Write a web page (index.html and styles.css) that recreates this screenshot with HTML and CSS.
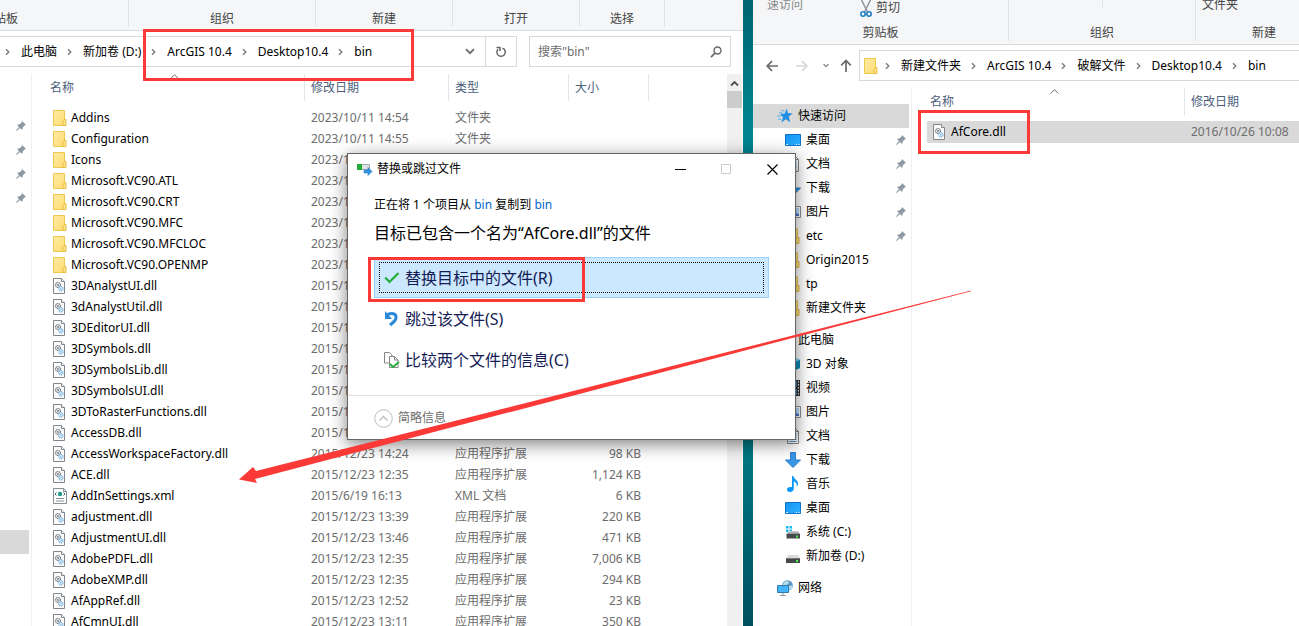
FILE: index.html
```
<!DOCTYPE html>
<html lang="zh-CN">
<head>
<meta charset="utf-8">
<title>bin</title>
<link rel="stylesheet" href="styles.css">
</head>
<body>
<svg class="defs" aria-hidden="true">
  <defs>
    <linearGradient id="gf" x1="0" y1="0" x2="1" y2="1"><stop offset="0" stop-color="#ffeba3"/><stop offset="1" stop-color="#ffdc73"/></linearGradient>
    <linearGradient id="gd" x1="0" y1="0" x2="1" y2="1"><stop offset="0" stop-color="#1492f5"/><stop offset="1" stop-color="#2fb2ff"/></linearGradient>
    <linearGradient id="gg" x1="0" y1="0" x2="0" y2="1"><stop offset="0" stop-color="#d3d5d8"/><stop offset="1" stop-color="#8a8d90"/></linearGradient>
  </defs>
  <symbol id="folder" viewBox="0 0 14 16"><path d="M.5.5h11v15H.5z" fill="url(#gf)" stroke="#edc84e"/><path d="M11.500 9.500h1.500v6h-3v-4z" fill="#ffe48f" stroke="#e6bd3c"/></symbol>
  <symbol id="dll" viewBox="0 0 12 16" preserveAspectRatio="xMinYMid"><path d="M.5.500h8l3 3v12H.500z" fill="#fcfcfc" stroke="#80868b"/><path d="M8.500.500v3h3" fill="#fff" stroke="#80868b"/><circle cx="5" cy="7" r="2.500" fill="#e3e6e9" stroke="#747b81" stroke-width="1.100" stroke-dasharray="1.300 .5"/><circle cx="5" cy="7" r=".9" fill="#747b81"/><circle cx="7.900" cy="10.800" r="2.200" fill="#dbeefb" stroke="#7fb3dc" stroke-width="1.100" stroke-dasharray="1.300 .5"/><circle cx="7.900" cy="10.800" r=".8" fill="#7fb3dc"/></symbol>
  <symbol id="xml" viewBox="0 0 14 16"><path d="M.5.500h10l3 3v12H.500z" fill="#fff" stroke="#8a8f94"/><path d="M10.500.500v3h3" fill="none" stroke="#8a8f94"/><circle cx="7" cy="6" r="2.200" fill="#1b9b83"/><path d="M3.500 4.500 2 6l1.500 1.500M10.500 4.500 12 6l-1.500 1.500" fill="none" stroke="#44617c"/><path d="M3 10.500h8M3 13h8" stroke="#8a8f94"/></symbol>
  <symbol id="pin" viewBox="0 0 10 10"><path d="M6.200.500 9.500 3.800 8.300 4.500 6.500 6.200 6 8.500 3.900 6.700.6 9.700.3 9.400 3.300 6.100 1.500 4 3.800 3.500 5.600 1.700z" fill="#8b98a3" stroke="#8b98a3" stroke-width=".6"/></symbol>
  <symbol id="chev" viewBox="0 0 5 8"><path d="M1 1.200 3.800 4 1 6.800" fill="none" stroke="#7a7a7a" stroke-width="1.400"/></symbol>
  <symbol id="down" viewBox="0 0 10 7"><path d="M1 1.200 5 5.200 9 1.200" fill="none" stroke="#6a6a6a" stroke-width="1.800"/></symbol>
  <symbol id="up" viewBox="0 0 9 5"><path d="M.7 4.500 4.500.7 8.300 4.500" fill="none" stroke="#6a6a6a"/></symbol>
  <symbol id="desk" viewBox="0 0 16 12"><path d="M.5.500h15v11H.500z" fill="url(#gd)" stroke="#0b74c9"/><path d="M1.500 10.500h1.500M11 10.500h1M13.500 10.500h1" stroke="#fff"/></symbol>
  <symbol id="doc" viewBox="0 0 12 16"><path d="M.5.500h8l3 3v12H.500z" fill="#fff" stroke="#858585"/><path d="M8.500.500v3h3" fill="none" stroke="#858585"/><path d="M2.500 5.500h7M2.500 7.500h7M2.500 9.500h7M2.500 11.500h7M2.500 13.500h7" stroke="#4f94cf"/></symbol>
  <symbol id="load" viewBox="0 0 16 16"><path d="M5.500.500h5v7.500h5L8 15.500.5 8h5z" fill="#3a96e6" stroke="#2a7fce"/></symbol>
  <symbol id="pic" viewBox="0 0 16 12"><path d="M.5.500h15v11H.500z" fill="#fff" stroke="#8b8f94"/><path d="M2 2h12v8H2z" fill="#b9dcff"/><path d="M2 10l4-4 3 2 2-1 3 1.500V10z" fill="#3d74c6"/></symbol>
  <symbol id="cube" viewBox="0 0 16 16"><path d="M8 1l7 3v8l-7 3-7-3V4z" fill="#1aa7cd"/><path d="M8 1l7 3-7 3-7-3z" fill="#83e0f5"/><path d="M8 7l7-3v8l-7 3z" fill="#078bb4"/></symbol>
  <symbol id="film" viewBox="0 0 16 16"><path d="M1 0h14v16H1z" fill="#333"/><path d="M4 1h8v6H4zM4 9h8v6H4z" fill="#327bb5"/><path d="M2.500 1v15M13.500 1v15" stroke="#eee" stroke-dasharray="1.500 1.500"/><path d="M7 1h3v5H7z" fill="#719e38"/></symbol>
  <symbol id="music" viewBox="0 0 12 16"><path d="M5 0h1.500c0 3 4.500 4 4.500 7.500 0 1.500-.6 2.500-1.200 3.200.5-3-1-4.700-3-5.200v7.200C6.800 14.500 5 16 3 16S0 15 0 13.500s2-3 5-2.300z" fill="#0797f9"/></symbol>
  <symbol id="drive" viewBox="0 0 14 8"><path d="M2 0h10l2 3H0z" fill="#d9dbdd"/><path d="M0 3h14v5H0z" fill="#45484b"/><path d="M0 3h14v1H0z" fill="#777"/><path d="M10 5h2v2h-2z" fill="#4ef04a"/></symbol>
  <symbol id="sys" viewBox="0 0 16 13"><path d="M1 0h2.500v2.500H1zM4.500 0H7v2.500H4.500zM1 3.500h2.500V6H1zM4.500 3.500H7V6H4.500z" fill="#13b8ef"/><path d="M4 5h9l2 3H1.500z" fill="url(#gg)"/><path d="M1.500 8H15v4.500H1.500z" fill="#45484b"/><path d="M11 9.500h2v2h-2z" fill="#4ef04a"/></symbol>
  <symbol id="net" viewBox="0 0 16 16"><circle cx="10.500" cy="5.500" r="5.300" fill="#5b97bd"/><path d="M7 2.500c2-2 5-1.500 5 0s-2 1.500-2.500 3S6.500 6 6 5zM12 6c2-1 3.500-.5 3.500.5S14 10 12.500 10 11 7 12 6z" fill="#b5dcea"/><path d="M.5 5.500h11v7H.500z" fill="#45b4fb" stroke="#337cad"/><path d="M6 13v2M3 15.500h6" stroke="#8b98a3"/></symbol>
  <symbol id="pc" viewBox="0 0 16 14"><path d="M.5.500h15v10H.500z" fill="#4db8f5" stroke="#2b6d99"/><path d="M4 13h8" stroke="#777"/></symbol>
  <symbol id="star" viewBox="0 0 15 14"><path d="M9.200 0l1 4.300 4.500.3-3.600 2.900 1.200 5.300-4-2.700-4.200 3 1.500-4.900L3 5.200l4.200-.5z" fill="#238fe4"/><path d="M2 4h3M0 7h4M1 10h3M4 2h3" stroke="#55adeb"/></symbol>
</svg>

<div class="desktop">
  <section class="window window-left">
    <div class="ribbon">
      <div class="group group-clip"><span>剪贴板</span></div>
      <div class="group group-org"><span>组织</span></div>
      <div class="group group-new"><span>新建</span></div>
      <div class="group group-open"><span>打开</span></div>
      <div class="group group-select"><span>选择</span></div>
    </div>
    <div class="toolbar">
      <div class="address address-cut">
        <nav class="crumbs">
          <svg class="chev"><use href="#chev"/></svg><a href="#">此电脑</a>
          <svg class="chev"><use href="#chev"/></svg><a href="#">新加卷 (D:)</a>
          <svg class="chev"><use href="#chev"/></svg><a href="#">ArcGIS 10.4</a>
          <svg class="chev"><use href="#chev"/></svg><a href="#">Desktop10.4</a>
          <svg class="chev"><use href="#chev"/></svg><a href="#">bin</a>
        </nav>
        <button class="addr-btn" aria-label="展开"><svg width="10" height="7"><use href="#down"/></svg></button>
        <button class="addr-btn addr-refresh" aria-label="刷新"><svg width="12" height="12" viewBox="0 0 12 12"><path d="M3 3.200A4.200 4.200 0 1 0 7.500 2.100M1.500 1.500h3.500v3.500" fill="none" stroke="#666" stroke-width="1.500"/></svg></button>
      </div>
      <label class="search">
        <input type="text" aria-label="搜索" placeholder='搜索"bin"'>
        <svg width="12" height="12" viewBox="0 0 12 12"><circle cx="7.500" cy="4.500" r="3.500" fill="none" stroke="#666" stroke-width="1.400"/><path d="M5 7 1 11.200" stroke="#666" stroke-width="1.800"/></svg>
      </label>
    </div>
    <div class="body">
      <nav class="strip">
        <ul class="strip-pins">
          <li><svg class="pin"><use href="#pin"/></svg></li>
          <li><svg class="pin"><use href="#pin"/></svg></li>
          <li><svg class="pin"><use href="#pin"/></svg></li>
          <li><svg class="pin"><use href="#pin"/></svg></li>
        </ul>
        <div class="strip-current"></div>
      </nav>
      <div class="files">
        <svg class="sort"><use href="#up"/></svg>
        <table class="list">
          <colgroup><col class="c-name"><col class="c-date"><col class="c-type"><col class="c-size"><col></colgroup>
          <thead><tr><th>名称</th><th>修改日期</th><th>类型</th><th>大小</th><th class="rest"></th></tr></thead>
          <tbody>
            <tr><td><svg class="fi"><use href="#folder"/></svg>Addins</td><td>2023/10/11 14:54</td><td>文件夹</td><td></td></tr>
            <tr><td><svg class="fi"><use href="#folder"/></svg>Configuration</td><td>2023/10/11 14:55</td><td>文件夹</td><td></td></tr>
            <tr><td><svg class="fi"><use href="#folder"/></svg>Icons</td><td>2023/10/11</td><td></td><td></td></tr>
            <tr><td><svg class="fi"><use href="#folder"/></svg>Microsoft.VC90.ATL</td><td>2023/10/11</td><td></td><td></td></tr>
            <tr><td><svg class="fi"><use href="#folder"/></svg>Microsoft.VC90.CRT</td><td>2023/10/11</td><td></td><td></td></tr>
            <tr><td><svg class="fi"><use href="#folder"/></svg>Microsoft.VC90.MFC</td><td>2023/10/11</td><td></td><td></td></tr>
            <tr><td><svg class="fi"><use href="#folder"/></svg>Microsoft.VC90.MFCLOC</td><td>2023/10/11</td><td></td><td></td></tr>
            <tr><td><svg class="fi"><use href="#folder"/></svg>Microsoft.VC90.OPENMP</td><td>2023/10/11</td><td></td><td></td></tr>
            <tr><td><svg class="fi"><use href="#dll"/></svg>3DAnalystUI.dll</td><td>2015/12/23</td><td></td><td></td></tr>
            <tr><td><svg class="fi"><use href="#dll"/></svg>3dAnalystUtil.dll</td><td>2015/12/23</td><td></td><td></td></tr>
            <tr><td><svg class="fi"><use href="#dll"/></svg>3DEditorUI.dll</td><td>2015/12/23</td><td></td><td></td></tr>
            <tr><td><svg class="fi"><use href="#dll"/></svg>3DSymbols.dll</td><td>2015/12/23</td><td></td><td></td></tr>
            <tr><td><svg class="fi"><use href="#dll"/></svg>3DSymbolsLib.dll</td><td>2015/12/23</td><td></td><td></td></tr>
            <tr><td><svg class="fi"><use href="#dll"/></svg>3DSymbolsUI.dll</td><td>2015/12/23</td><td></td><td></td></tr>
            <tr><td><svg class="fi"><use href="#dll"/></svg>3DToRasterFunctions.dll</td><td>2015/12/23</td><td></td><td></td></tr>
            <tr><td><svg class="fi"><use href="#dll"/></svg>AccessDB.dll</td><td>2015/12/23</td><td></td><td></td></tr>
            <tr><td><svg class="fi"><use href="#dll"/></svg>AccessWorkspaceFactory.dll</td><td>2015/12/23 14:24</td><td>应用程序扩展</td><td>98 KB</td></tr>
            <tr><td><svg class="fi"><use href="#dll"/></svg>ACE.dll</td><td>2015/12/23 12:35</td><td>应用程序扩展</td><td>1,124 KB</td></tr>
            <tr><td><svg class="fi"><use href="#xml"/></svg>AddInSettings.xml</td><td>2015/6/19 16:13</td><td>XML 文档</td><td>6 KB</td></tr>
            <tr><td><svg class="fi"><use href="#dll"/></svg>adjustment.dll</td><td>2015/12/23 13:39</td><td>应用程序扩展</td><td>220 KB</td></tr>
            <tr><td><svg class="fi"><use href="#dll"/></svg>AdjustmentUI.dll</td><td>2015/12/23 13:46</td><td>应用程序扩展</td><td>471 KB</td></tr>
            <tr><td><svg class="fi"><use href="#dll"/></svg>AdobePDFL.dll</td><td>2015/12/23 12:35</td><td>应用程序扩展</td><td>7,006 KB</td></tr>
            <tr><td><svg class="fi"><use href="#dll"/></svg>AdobeXMP.dll</td><td>2015/12/23 12:35</td><td>应用程序扩展</td><td>294 KB</td></tr>
            <tr><td><svg class="fi"><use href="#dll"/></svg>AfAppRef.dll</td><td>2015/12/23 12:52</td><td>应用程序扩展</td><td>23 KB</td></tr>
            <tr><td><svg class="fi"><use href="#dll"/></svg>AfCmnUI.dll</td><td>2015/12/23 13:11</td><td>应用程序扩展</td><td>350 KB</td></tr>
          </tbody>
        </table>
      </div>
      <div class="scrollbar"><svg width="9" height="7" viewBox="0 0 9 7"><path d="M1 5.500 4.500 2 8 5.500" fill="none" stroke="#505050" stroke-width="1.800"/></svg><div class="thumb"></div></div>
    </div>
  </section>

  <section class="window window-right">
    <div class="ribbon ribbon-tall">
      <div class="group group-clip2">
        <div class="tools"><span class="tool-pin">速访问</span><button class="tool-cut"><svg width="12" height="18" viewBox="0 0 12 18"><path d="M1.500 0 7.500 12M10.500 0 4.500 12" stroke="#8c969e" stroke-width="1.500"/><circle cx="3" cy="14" r="2.200" fill="none" stroke="#2180c3" stroke-width="1.600"/><circle cx="9" cy="14" r="2.200" fill="none" stroke="#2180c3" stroke-width="1.600"/></svg>剪切</button></div>
        <span>剪贴板</span>
      </div>
      <div class="group group-org"><div class="tools tools-split"><i></i></div><span>组织</span></div>
      <div class="group group-new2"><div class="tools tools-new">文件夹</div><span>新建</span></div>
    </div>
    <div class="toolbar toolbar-right">
      <div class="history">
        <button aria-label="后退"><svg width="12" height="12" viewBox="0 0 12 12"><path d="M12 6H1.500M6 1.200 1.200 6 6 10.800" fill="none" stroke="#6a6a6a" stroke-width="1.700"/></svg></button>
        <button aria-label="前进"><svg width="12" height="12" viewBox="0 0 12 12"><path d="M0 6h10.500M6 1.200 10.800 6 6 10.800" fill="none" stroke="#d6d6d6" stroke-width="1.700"/></svg></button>
        <button aria-label="最近位置"><svg width="6" height="5"><use href="#down"/></svg></button>
        <button aria-label="上移"><svg width="12" height="13" viewBox="0 0 12 13"><path d="M6 13V1.500M1.200 6.300 6 1.500l4.800 4.800" fill="none" stroke="#6a6a6a" stroke-width="1.700"/></svg></button>
      </div>
      <div class="address address-right">
        <svg class="fi"><use href="#folder"/></svg>
        <nav class="crumbs">
          <svg class="chev"><use href="#chev"/></svg><a href="#">新建文件夹</a>
          <svg class="chev"><use href="#chev"/></svg><a href="#">ArcGIS 10.4</a>
          <svg class="chev"><use href="#chev"/></svg><a href="#">破解文件</a>
          <svg class="chev"><use href="#chev"/></svg><a href="#">Desktop10.4</a>
          <svg class="chev"><use href="#chev"/></svg><a href="#">bin</a>
        </nav>
      </div>
    </div>
    <div class="body">
      <nav class="side">
        <a class="root current" href="#"><svg><use href="#star"/></svg>快速访问</a>
        <a href="#"><svg><use href="#desk"/></svg>桌面<svg class="pin"><use href="#pin"/></svg></a>
        <a href="#"><svg><use href="#doc"/></svg>文档<svg class="pin"><use href="#pin"/></svg></a>
        <a href="#"><svg><use href="#load"/></svg>下载<svg class="pin"><use href="#pin"/></svg></a>
        <a href="#"><svg><use href="#pic"/></svg>图片<svg class="pin"><use href="#pin"/></svg></a>
        <a href="#"><svg><use href="#folder"/></svg>etc<svg class="pin"><use href="#pin"/></svg></a>
        <a href="#"><svg><use href="#folder"/></svg>Origin2015</a>
        <a href="#"><svg><use href="#folder"/></svg>tp</a>
        <a href="#"><svg><use href="#folder"/></svg>新建文件夹</a>
        <a class="root spaced" href="#"><svg><use href="#pc"/></svg>此电脑</a>
        <a href="#"><svg><use href="#cube"/></svg>3D 对象</a>
        <a href="#"><svg><use href="#film"/></svg>视频</a>
        <a href="#"><svg><use href="#pic"/></svg>图片</a>
        <a href="#"><svg><use href="#doc"/></svg>文档</a>
        <a href="#"><svg><use href="#load"/></svg>下载</a>
        <a href="#"><svg><use href="#music"/></svg>音乐</a>
        <a href="#"><svg><use href="#desk"/></svg>桌面</a>
        <a href="#"><svg class="disk"><use href="#sys"/></svg>系统 (C:)</a>
        <a href="#"><svg class="disk disk-plain"><use href="#drive"/></svg>新加卷 (D:)</a>
        <a class="root spaced" href="#"><svg><use href="#net"/></svg>网络</a>
      </nav>
      <div class="files files-right">
        <svg class="sort"><use href="#up"/></svg>
        <table class="list list-right">
          <colgroup><col><col class="c-date2"></colgroup>
          <thead><tr><th>名称</th><th>修改日期</th></tr></thead>
          <tbody><tr><td><svg class="fi"><use href="#dll"/></svg>AfCore.dll</td><td>2016/10/26 10:08</td></tr></tbody>
        </table>
      </div>
    </div>
  </section>

  <div class="dialog" role="dialog" aria-label="替换或跳过文件">
    <header class="titlebar">
      <svg width="16" height="14" viewBox="0 0 16 14"><path d="M.5 2.500h12v5H.500z" fill="#dfe3e6" stroke="#a4abb0"/><path d="M0 2h5v6H0z" fill="#22ac38"/><path d="M7 8h4V5.500L15 9.500 11 13.500V11H7z" fill="#3293e4" stroke="#267dc6" stroke-width=".6"/></svg>
      <span class="title">替换或跳过文件</span>
      <button aria-label="最小化"><svg width="11" height="11"><path d="M0 5.500h11" stroke="#000"/></svg></button>
      <button aria-label="最大化" disabled><svg width="11" height="11"><path d="M.5.500h9v9h-9z" fill="none" stroke="#ccc"/></svg></button>
      <button aria-label="关闭"><svg width="11" height="11"><path d="M.5.500l10 10M10.500.500l-10 10" stroke="#000" stroke-width="1.200"/></svg></button>
    </header>
    <div class="content">
      <p class="status">正在将 1 个项目从 <a href="#">bin</a> 复制到 <a href="#">bin</a></p>
      <h1>目标已包含一个名为“AfCore.dll”的文件</h1>
      <button class="choice focused"><svg width="16" height="16" viewBox="0 0 16 16"><path d="M1.200 7.500 5.500 12 14.500 3" fill="none" stroke="#22ac38" stroke-width="2.200"/></svg>替换目标中的文件(R)</button>
      <button class="choice"><svg width="16" height="16" viewBox="0 0 16 16"><path d="M2 4.500C8 .5 12.500 3 12 7c-.3 3-3 4.500-6 7" fill="none" stroke="#2b88d8" stroke-width="3"/><path d="M1 0v8h7z" fill="#2b88d8"/></svg>跳过该文件(S)</button>
      <button class="choice"><svg width="16" height="16" viewBox="0 0 16 16"><path d="M.5.500h5l2.500 2.500v8H.500z" fill="#fff" stroke="#888"/><path d="M5.500 4.500h5l3.500 3.500v7.500H5.500z" fill="#fff" stroke="#888"/><path d="M10.500 4.500V8H14" fill="none" stroke="#888"/><path d="M6 12l3 3 6-5" fill="none" stroke="#22ac38" stroke-width="1.800"/></svg>比较两个文件的信息(C)</button>
    </div>
    <footer class="foot">
      <button class="toggle"><svg width="19" height="19" viewBox="0 0 19 19"><circle cx="9.500" cy="9.500" r="8.800" fill="#fff" stroke="#bdbdbd"/><path d="M5.500 11.500l4-4 4 4" fill="none" stroke="#bdbdbd" stroke-width="1.400"/></svg>简略信息</button>
    </footer>
  </div>

  <div class="mark mark-path"></div>
  <div class="mark mark-file"></div>
  <div class="mark mark-choice"></div>
  <svg class="arrow" width="732" height="194" viewBox="239 290 732 194"><path d="M971 290.600 256 471 253 467 239 479.500 257 483 255 479 971 291.200z" fill="#fb3a38"/></svg>
</div>
</body>
</html>
```

FILE: styles.css
```
* { box-sizing: border-box; }

body {
  margin: 0;
  font: 12px/20px "Noto Sans", "Noto Sans CJK SC", sans-serif;
  color: #000;
}

ul, p, h1 { margin: 0; padding: 0; list-style: none; }
a { color: inherit; text-decoration: none; }
svg { display: block; flex: none; }
button { font: inherit; color: inherit; background: none; border: 0; padding: 0; }

.defs { position: absolute; width: 0; height: 0; }

.desktop {
  position: relative;
  display: flex;
  gap: 10px;
  height: 100vh;
  overflow: hidden;
  background: linear-gradient(#00646f, #008590 20%, #007a85 70%, #004f5e);
}

.window {
  display: flex;
  flex-direction: column;
  min-width: 0;
  overflow: hidden;
  background: #fff;
}
.window-left { flex: 743 1 0; }
.window-right { flex: 546 1 0; }

/* ribbon */
.ribbon {
  display: flex;
  flex: none;
  height: 31px;
  padding-bottom: 3px;
  background: #f5f6f7;
  border-bottom: 1px solid #d9dadb;
  color: #444;
  overflow: hidden;
}
.ribbon-tall { height: 45px; }
.group {
  display: flex;
  flex: none;
  flex-direction: column;
  justify-content: flex-end;
  align-items: center;
  line-height: 16px;
  border-right: 1px solid #e0e1e2;
}
.group-clip { width: 129px; align-items: flex-start; }
.group-clip span { margin-left: -18px; }
.group-org { width: 187px; }
.group-new { width: 137px; }
.group-open { width: 127px; }
.group-select { width: 85px; }
.group-clip2 { width: 256px; }
.group-new2 { width: 137px; }
.tools {
  display: flex;
  flex: 1;
  width: 100%;
  align-items: flex-start;
  min-height: 0;
}
.tool-pin { padding-left: 14px; line-height: 10px; color: #888; }
.tool-cut { display: flex; align-items: flex-end; gap: 4px; margin-left: 57px; height: 18px; line-height: 20px; }
.tools-split { justify-content: center; }
.tools-split i { width: 1px; height: 7px; background: #e0e1e2; }
.tools-new { padding-left: 6px; line-height: 10px; }

/* address row */
.toolbar {
  display: flex;
  flex: none;
  gap: 12px;
  padding: 5px 12px 0 0;
}
.toolbar-right { padding: 5px 0 0 13px; gap: 7px; }
.address {
  display: flex;
  align-items: stretch;
  height: 31px;
  min-width: 0;
  flex: 1;
  border: 1px solid #d9d9d9;
}
.address-cut { margin-left: -6px; }
.address-right { align-items: center; padding-left: 4px; border-right: 0; }
.crumbs { display: flex; flex: 1; align-items: center; min-width: 0; overflow: hidden; white-space: nowrap; }
.chev { width: 5px; height: 8px; margin: 0 11px 0 10px; }
.address-right .chev:first-child { margin-left: 7px; }
.addr-btn { display: grid; place-items: center; width: 30px; }
.addr-refresh { width: 31px; border-left: 1px solid #d9d9d9; }
.search {
  display: flex;
  align-items: center;
  width: 202px;
  padding: 0 8px;
  border: 1px solid #d9d9d9;
}
.search input { flex: 1; min-width: 0; border: 0; padding: 0; font: inherit; outline: 0; }
.search input::placeholder { color: #6d6d6d; opacity: 1; }
.history { display: flex; align-items: center; gap: 18px; }
.history button:nth-child(3) { margin: 0 -7px 0 -3px; }

/* panes */
.body { display: flex; flex: 1; min-height: 0; padding-top: 7px; }
.strip { width: 32px; border-right: 1px solid #f0f0f0; padding-top: 40px; }
.strip-pins li { display: flex; justify-content: flex-end; align-items: center; height: 24px; padding-right: 5px; }
.strip-current { height: 24px; width: 29px; margin-top: 320px; background: #d9d9d9; }
.pin { width: 10px; height: 10px; }

.files { position: relative; flex: 1; min-width: 0; overflow: hidden; }
.sort { position: absolute; left: 138px; top: 0; width: 9px; height: 5px; }
.list { width: 100%; table-layout: fixed; border-collapse: separate; border-spacing: 0; white-space: nowrap; }
.list th {
  height: 27px;
  padding: 0 0 0 6px;
  font-weight: 400;
  text-align: left;
  color: #4c607a;
  border-right: 1px solid #e5e5e5;
}
.list th:first-child { padding-left: 18px; }
.list th.rest, .list-right th:last-child { border: 0; }
.list tbody::before { content: ""; display: block; height: 6px; }
.list td { height: 21px; padding: 0 0 0 6px; color: #6d6d6d; }
.list td:nth-child(4) { text-align: right; padding-right: 8px; }
.list td:first-child { padding-left: 21px; color: #000; }
.fi { display: inline-block; width: 14px; height: 16px; vertical-align: -4px; }
.list .fi { margin: 0 4px 0 0; }
.c-name { width: 273px; }
.c-date { width: 144px; }
.c-type { width: 120px; }
.c-size { width: 80px; }
.c-date2 { width: 114px; }

.scrollbar { display: flex; flex-direction: column; align-items: center; gap: 4px; width: 15px; margin-right: 1px; padding-top: 6px; background: #f0f0f0; }
.thumb { width: 15px; height: 17px; background: #cdcdcd; }

.side { width: 159px; padding-top: 16px; border-right: 1px solid #f0f0f0; }
.side a { display: flex; align-items: center; gap: 5px; height: 24px; padding-left: 32px; margin-right: 2px; }
.side svg { width: 16px; height: 16px; }
.side a.root { padding-left: 24px; }
.side .current { background: #d9d9d9; }
.side .spaced { margin-top: 8px; }
.side .pin { width: 10px; height: 10px; margin: 0 3px 0 auto; }
.side .disk { height: 13px; }
.side .disk-plain { height: 8px; align-self: flex-end; margin-bottom: 5px; }

.files-right { padding-left: 15px; }
.files-right .sort { top: 1px; }
.list-right th:first-child { padding-left: 3px; }
.list-right td { height: 22px; background: #d9d9d9; }
.list-right td:first-child { padding-left: 6px; }

/* dialog */
.dialog {
  position: absolute;
  left: 347px;
  top: 153px;
  width: 449px;
  background: #fff;
  border: 1px solid #666;
  box-shadow: 0 4px 16px rgba(0, 0, 0, .5);
}
.titlebar { display: flex; align-items: center; height: 30px; padding-left: 9px; }
.title { flex: 1; padding-left: 4px; }
.titlebar button { display: grid; place-items: center; width: 46px; height: 30px; }
.content { padding: 11px 26px 15px; }
.status a { color: #0066cc; }
h1 { font-size: 16px; line-height: 24px; font-weight: 400; margin: 6px 0 12px; white-space: nowrap; }
.choice {
  display: flex;
  align-items: center;
  gap: 5px;
  width: 100%;
  height: 41px;
  padding-left: 9px;
  border: 1px solid transparent;
  font-size: 16px;
  color: #151c55;
}
.focused { background: #cce8ff; border-color: #99d1ff; outline: 1px dotted #000; outline-offset: -6px; }
.foot { border-top: 1px solid #dfdfdf; padding: 12px 26px 11px; }
.toggle { display: flex; align-items: center; gap: 5px; color: #6d6d6d; }

/* red annotations lying over the windows */
.mark { position: absolute; border: 3px solid #fb3a38; }
.mark-path { left: 143px; top: 29px; width: 271px; height: 52px; }
.mark-file { left: 918px; top: 110px; width: 112px; height: 44px; }
.mark-choice { left: 368px; top: 257px; width: 217px; height: 45px; }
.arrow { position: absolute; left: 239px; top: 290px; }
```
